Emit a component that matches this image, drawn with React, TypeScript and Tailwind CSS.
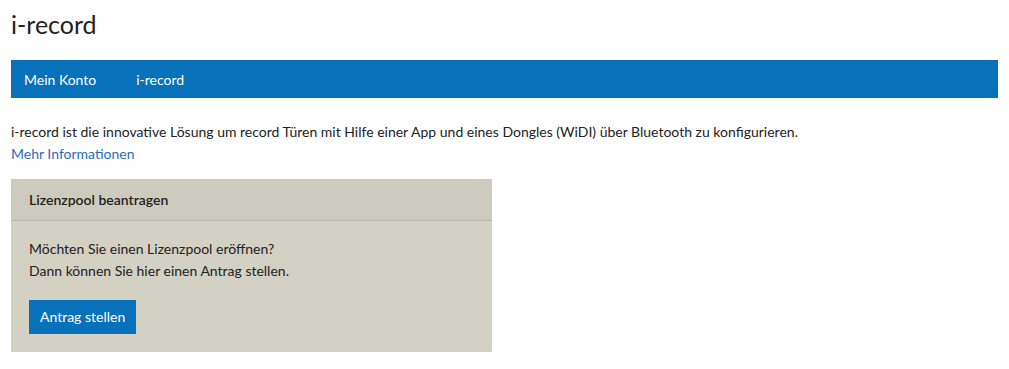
export default function App() {
  return (
    <div className="min-h-screen bg-white px-[11px] text-[14px] text-[#222] font-['Lato',sans-serif]">
      <h1 className="pt-[9px] text-[25px] leading-[30px] font-normal text-[#222]">i-record</h1>

      <nav className="mt-[21px] flex h-[38px] items-center bg-[#0771b9] px-[13px] text-white">
        <a className="mr-[40px]">Mein Konto</a>
        <a>i-record</a>
      </nav>

      <div className="mt-[23px] leading-[22px]">
        <p>
          i-record ist die innovative Lösung um record Türen mit Hilfe einer App und eines Dongles (WiDI) über Bluetooth zu konfigurieren.
        </p>
        <a className="text-[#2a6ebb]">Mehr Informationen</a>
      </div>

      <section className="mt-[14px] w-[481px] bg-[#d3d0c4]">
        <header className="flex h-[42px] items-center border-b border-[#b7b5a9] bg-[#cdcbbe] px-[18px] font-semibold">
          Lizenzpool beantragen
        </header>
        <div className="px-[18px] pt-[17px] pb-[18px] leading-[22px]">
          <p>Möchten Sie einen Lizenzpool eröffnen?</p>
          <p>Dann können Sie hier einen Antrag stellen.</p>
          <button className="mt-[18px] h-[34px] bg-[#0771b9] px-[11px] text-white">
            Antrag stellen
          </button>
        </div>
      </section>
    </div>
  );
}
